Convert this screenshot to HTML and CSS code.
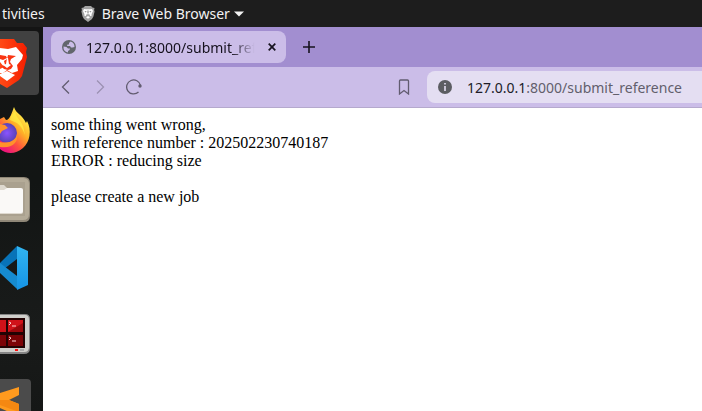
FILE: index.html
```html
<!DOCTYPE html>
<html lang="en">
<head>
<meta charset="utf-8">
<title>127.0.0.1:8000/submit_reference</title>
<link rel="stylesheet" href="styles.css">
</head>
<body>
<header class="topbar">
  <button class="activities">tivities</button>
  <button class="app-menu">
    <svg width="14" height="16" viewBox="0 0 14 16"><path d="M4 0h6l1.500 1.500 2 .5-.4 2 .5 1.500-1.200 5L11 13l-4 3-4-3-1.400-2.500L.4 5.500.9 4 .5 2l2-.5z" fill="#a3a3a3"/><path d="M3 3l2 .2h4L11 3l1 2-1.500 3.200.3 1.300-2 .7.2-1.500L7 8l-2 .7.2 1.500-2-.7.300-1.300L2 5z" fill="#fff"/><path d="M3.500 5l2.200.6-1 .8zM10.500 5l-2.200.6 1 .8zM6.500 4.500h1v3h-1z" fill="#777"/><path d="M7 10l2 1.300-2 1.500-2-1.500z" fill="#fff"/></svg>
    <span>Brave Web Browser</span>
    <svg width="10" height="6" viewBox="0 0 10 6"><path d="M0 .5h10L5 5.500z" fill="#f2f2f2"/></svg>
  </button>
</header>
<div class="desktop">
  <nav class="dock" aria-label="Dock">
    <button class="dock-item tile tile-wide" aria-label="Brave">
      <svg width="39" height="64" viewBox="0 0 39 64"><defs><linearGradient id="br"><stop offset="0" stop-color="#ff4a16"/><stop offset="1" stop-color="#f51e00"/></linearGradient></defs><path d="M0 8h14l3 4h6l4 5-1 4 1 5-5 19-3 4-12 8-7-4z" fill="url(#br)"/><path d="M0 17l8 1 8-2 7 8-1 4-5 6 1 6-6 2-5-3-4 3H0v-4l4-2-4-5z" fill="#fff"/><path d="M0 24l6 1 1 2-4 2-3-1zM8 24l8 1-5 3-1 3 3 4-2 3-3 1-4-1-3-3 4-1-1-4 3-2z" fill="#f93512"/><path d="M7 27h1l1 6 2 1-4 3-4-3 3-1z" fill="#fff"/><path d="M7 40l8 4-8 6-7-5v-2z" fill="#fff"/></svg>
    </button>
    <button class="dock-item" aria-label="Firefox">
      <svg width="39" height="64" viewBox="0 0 39 64"><defs><linearGradient id="fx" x1="1" y1="0" x2=".3" y2="1"><stop offset=".2" stop-color="#fff04a"/><stop offset=".5" stop-color="#ffad27"/><stop offset=".75" stop-color="#ff553c"/><stop offset="1" stop-color="#ee1878"/></linearGradient><radialGradient id="fp"><stop offset="0" stop-color="#8a54ff"/><stop offset="1" stop-color="#5842b4"/></radialGradient></defs><path d="M14 8c2 7 8 7 12 16l1-2c5 9 3 21-4 27-8 7-17 6-23 1V20l4-2 2 3c4 0 6-8 8-13z" fill="url(#fx)"/><path d="M15 13c2 7 8 10 9 18l1 5c-2-6-5-10-8-12l-7-3c0-4 2-6 5-8z" fill="#fff044" opacity=".7"/><circle cx="7" cy="34" r="10" fill="url(#fp)"/><path d="M0 25l5 1 3 3-6 3-2 3zM0 43c10 2 16-2 17-8 2 8-5 15-17 13z" fill="#ff922b"/></svg>
    </button>
    <button class="dock-item" aria-label="Files">
      <svg width="39" height="64" viewBox="0 0 39 64"><path d="M-6 10h30q6 0 6 6v33q0 6-6 6H-6z" fill="#8f8777"/><path d="M-6 11h29q6 0 6 6v30q0 6-6 6H-6z" fill="#b4ab98"/><path d="M-6 15h31v34H-6z" fill="#aaa18f"/><path d="M0 18h4l4 4h13q2 0 2 2v21q0 2-2 2H0z" fill="#ded9cf"/><path d="M0 23h4l3-2h14q2 0 2 2v21q0 2-2 2H0z" fill="#faf9f7"/></svg>
    </button>
    <button class="dock-item" aria-label="Visual Studio Code">
      <svg width="39" height="64" viewBox="0 0 39 64"><defs><linearGradient id="vs" x1="0" x2="0" y1="0" y2="1"><stop offset="0" stop-color="#32b5f1"/><stop offset="1" stop-color="#1593e5"/></linearGradient></defs><path d="M17 11L0 28v9l17-13z" fill="#0873b8"/><path d="M0 28l17 13v13L0 38z" fill="#168bd0"/><path d="M17 11l11 5v34l-11 5z" fill="url(#vs)"/></svg>
    </button>
    <button class="dock-item" aria-label="Terminator">
      <svg width="39" height="64" viewBox="0 1 39 64"><path d="M-6 12h31q5 0 5 5v29q0 6-6 6H-6z" fill="#858585"/><path d="M-6 13h31q4 0 4 5v27q0 5-5 5H-6z" fill="#cfcfcb"/><path d="M0 16h25v30H0z" fill="#230303"/><path d="M0 18h6v12H0zM8 18h15v12H8z" fill="#d01219"/><path d="M0 33h6v11H0zM8 33h15v11H8z" fill="#7c0306"/><path d="M8 30l15-9v9z" fill="#9b080c"/><path d="M9 20l2 1-2 2M12 24h4M9 35l2 1-2 2M12 39h4" fill="none" stroke="#ffd1d1"/><path d="M15 47h3v2h-3z" fill="#f11"/><path d="M20 47h4v2h-4z" fill="#aaa"/></svg>
    </button>
    <button class="dock-item tile tile-last" aria-label="Sublime Text">
      <svg width="31" height="64" viewBox="0 0 31 64"><path d="M19 8v8L9 21l10 4v14L0 46v-9l9-4-9-4V14z" fill="#ff9a1e"/><path d="M0 21l9 0 10 4v8L0 26z" fill="#f58812"/></svg>
    </button>
  </nav>
  <div class="browser">
    <div class="tabs">
      <div class="tab">
        <svg width="14" height="14" viewBox="0 0 14 14"><circle cx="7" cy="7" r="7" fill="#62666c"/><path d="M8.500 1.500L7 3v1.500H5.500L5 6h3l1 1.500h1.500L12.500 7A5.600 5.600 0 0 0 8.500 1.500zM1.500 6.500l3 .5 1.500 1.500H8L7.500 10 6 11v1.500A5.600 5.600 0 0 1 1.500 6.500z" fill="#cbbde8"/></svg>
        <span class="tab-title">127.0.0.1:8000/submit_reference</span>
        <button class="close" aria-label="Close tab"><svg width="8" height="8" viewBox="0 0 8 8"><path d="M.7.7l6.600 6.600M7.300.7L.7 7.300" stroke="#17131f" stroke-width="1.700"/></svg></button>
      </div>
      <button class="new-tab" aria-label="New tab"><svg width="12" height="12" viewBox="0 0 12 12"><path d="M6 0v12M0 6h12" stroke="#17131f" stroke-width="1.600"/></svg></button>
    </div>
    <div class="toolbar">
      <div class="history">
        <button aria-label="Back"><svg width="16" height="16" viewBox="0 0 16 16"><path d="M11 1.500L4.500 8l6.500 6.500"/></svg></button>
        <button aria-label="Forward" disabled><svg width="16" height="16" viewBox="0 0 16 16"><path d="M5 1.500L11.500 8 5 14.500"/></svg></button>
        <button aria-label="Reload"><svg width="16" height="16" viewBox="0 0 16 16"><path d="M12.500 13A7 7 0 1 1 14.500 6.500"/><circle cx="14" cy="7" r="1.700" fill="#625c70" stroke="none"/></svg></button>
      </div>
      <button class="bookmark" aria-label="Bookmark"><svg width="12" height="16" viewBox="0 0 12 16"><path d="M2.500 1h7q1 0 1 1v13L6 11.500 1.500 15V2q0-1 1-1z"/></svg></button>
      <a class="address" href="#page">
        <svg width="14" height="14" viewBox="0 0 14 14"><circle cx="7" cy="7" r="7" fill="#5c5d62"/><path d="M6.200 3h1.600v1.600H6.200zM6.200 6h1.600v5H6.200z" fill="#e4def2"/></svg>
        <span><b>127.0.0.1</b>:8000/submit_reference</span>
      </a>
    </div>
    <main class="page" id="page">
      some thing went wrong,<br>
      with reference number : 202502230740187<br>
      ERROR : reducing size<br><br>
      please create a new job
    </main>
  </div>
</div>
</body>
</html>
```
FILE: styles.css
```css
* { box-sizing: border-box; }
body {
  margin: 0;
  height: 100vh;
  overflow: hidden;
  display: flex;
  flex-direction: column;
  background: #141615;
  font-family: "Noto Sans", sans-serif;
  font-size: 14px;
}
button {
  padding: 0;
  border: 0;
  background: none;
  color: inherit;
  font: inherit;
  display: flex;
  align-items: center;
  flex: none;
}
svg { display: block; flex: none; }
.topbar {
  flex: none;
  height: 27px;
  padding-left: 2px;
  display: flex;
  gap: 36px;
  background: #1d1d1d;
  color: #f2f2f2;
}
.app-menu { gap: 7px; }
.app-menu svg:last-child { margin-left: -3px; }
.desktop { flex: 1; min-height: 0; display: flex; }
.dock {
  width: 43px;
  flex: none;
  padding-top: 4px;
  overflow: hidden;
  display: flex;
  flex-direction: column;
  align-items: flex-start;
  gap: 4px;
  background: linear-gradient(#141414, #121514 40%, #191b1a 78%, #151716);
}
.dock-item { height: 64px; overflow: hidden; }
.dock-item.tile {
  border-radius: 0 4px 4px 0;
  background: #4b4b4b;
}
.dock-item.tile-wide { background: #414141; }
.dock-item.tile-last { margin-top: 8px; }
.browser {
  flex: 1;
  min-width: 0;
  display: flex;
  flex-direction: column;
  background: #fff;
}
.tabs {
  flex: none;
  height: 40px;
  padding: 4px 8px;
  display: flex;
  align-items: center;
  gap: 17px;
  background: #a28ed0;
  color: #15111d;
}
.tab {
  width: 235px;
  height: 32px;
  padding: 0 10px 0 11px;
  display: flex;
  align-items: center;
  gap: 10px;
  border-radius: 8px;
  background: #cbbde8;
}
.tab-title {
  flex: 1;
  min-width: 0;
  overflow: hidden;
  white-space: nowrap;
  mask-image: linear-gradient(to right, #000 85%, transparent 98%);
}
.toolbar {
  flex: none;
  height: 41px;
  padding-left: 15px;
  display: flex;
  align-items: center;
  border-bottom: 1px solid #b5a9cd;
  background: #cbbde8;
}
.history { display: flex; gap: 18px; }
.toolbar button svg { fill: none; stroke: #625c70; stroke-width: 1.3; }
.history button:disabled { opacity: 0.45; }
.bookmark { margin: 0 17px 0 auto; }
.address {
  width: 275px;
  height: 32px;
  padding-left: 11px;
  display: flex;
  align-items: center;
  gap: 15px;
  border-radius: 8px 0 0 8px;
  background: #e4def2;
  color: #625e6c;
  text-decoration: none;
  white-space: nowrap;
}
.address b { color: #201c28; font-weight: 400; }
.page {
  padding: 8px;
  color: #000;
  font: 16px/18px "Liberation Serif", serif;
}
```
